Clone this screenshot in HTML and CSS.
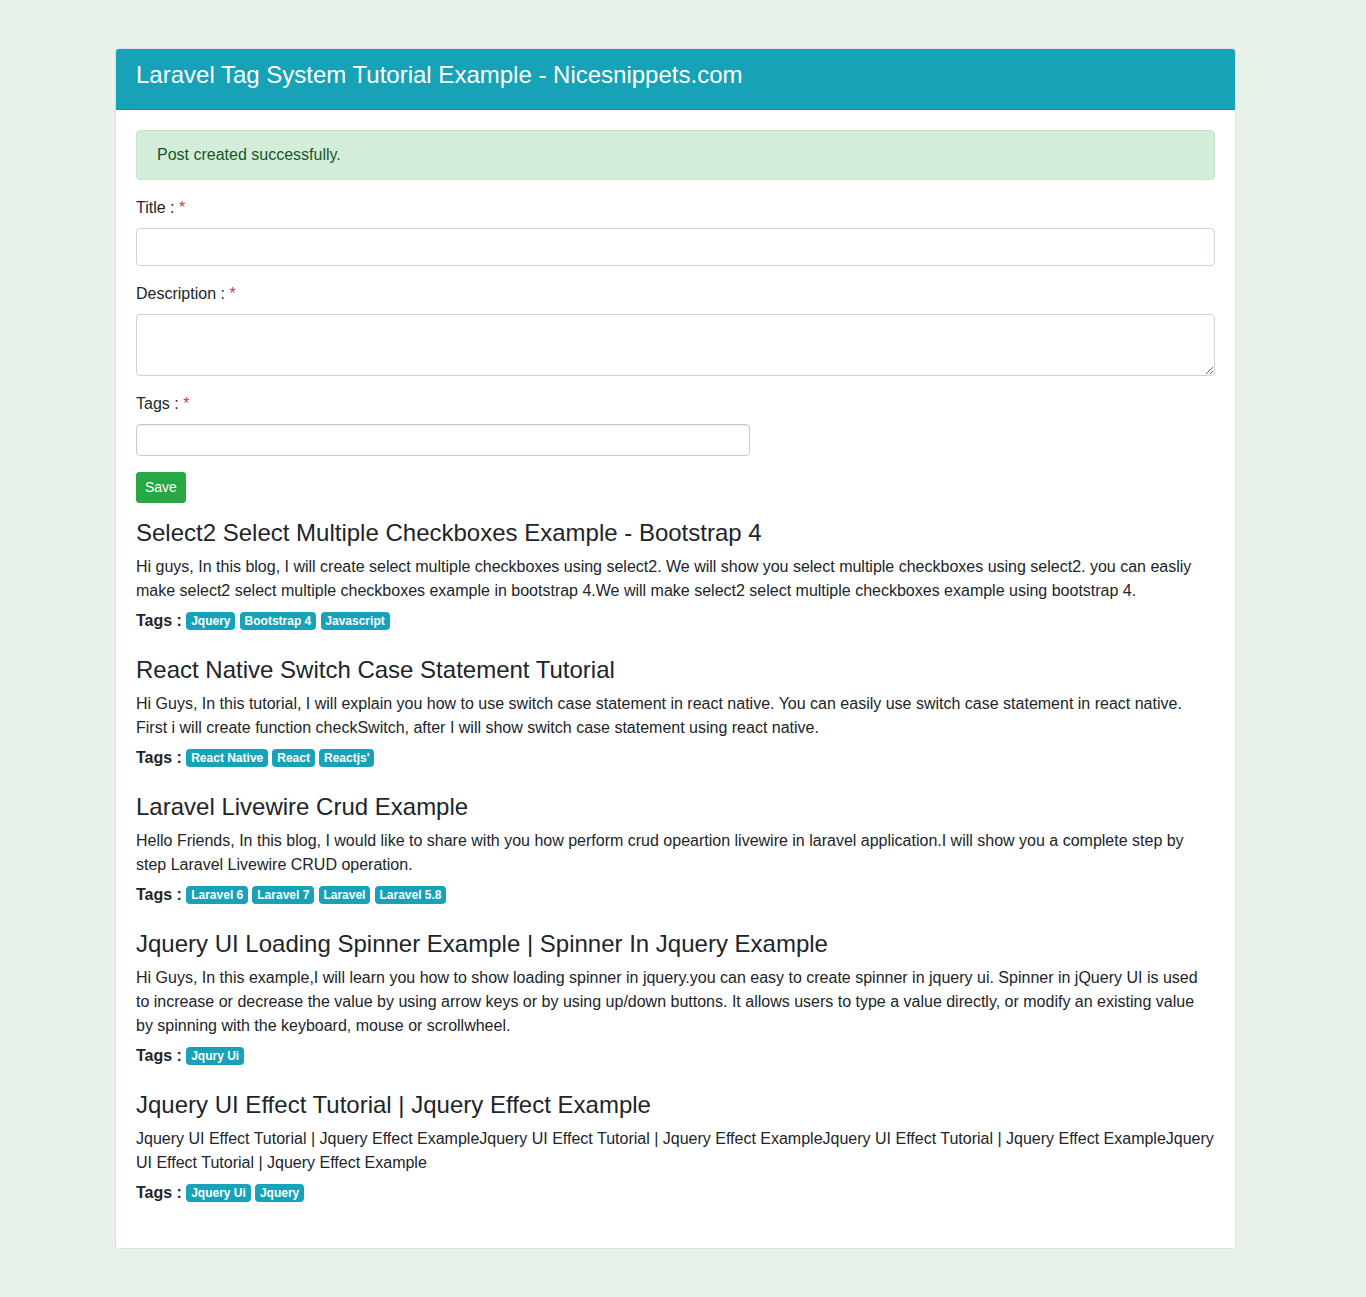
FILE: index.html
```html
<!DOCTYPE html>
<html lang="en">
<head>
<meta charset="utf-8">
<title>Laravel Tag System Tutorial Example</title>
<link rel="stylesheet" href="styles.css">
</head>
<body>
<div class="wrap">
  <div class="card">
    <div class="card-header">
      <h4 class="card-title">Laravel Tag System Tutorial Example - Nicesnippets.com</h4>
    </div>
    <div class="card-body">
      <div class="alert">Post created successfully.</div>
      <form class="form">
        <div class="form-group">
          <label class="label">Title : <span class="req">*</span></label>
          <input class="input" type="text">
        </div>
        <div class="form-group">
          <label class="label">Description : <span class="req">*</span></label>
          <textarea class="input textarea" rows="2"></textarea>
        </div>
        <div class="form-group">
          <label class="label">Tags : <span class="req">*</span></label>
          <div class="tags-input"></div>
        </div>
        <button type="button" class="btn">Save</button>
      </form>

      <div class="post">
        <h4 class="post-title">Select2 Select Multiple Checkboxes Example - Bootstrap 4</h4>
        <p class="post-text">Hi guys, In this blog, I will create select multiple checkboxes using select2. We will show you select multiple checkboxes using select2. you can easliy make select2 select multiple checkboxes example in bootstrap 4.We will make select2 select multiple checkboxes example using bootstrap 4.</p>
        <div class="tags"><strong>Tags :</strong> <span class="badge">Jquery</span> <span class="badge">Bootstrap 4</span> <span class="badge">Javascript</span></div>
      </div>

      <div class="post">
        <h4 class="post-title">React Native Switch Case Statement Tutorial</h4>
        <p class="post-text">Hi Guys, In this tutorial, I will explain you how to use switch case statement in react native. You can easily use switch case statement in react native. First i will create function checkSwitch, after I will show switch case statement using react native.</p>
        <div class="tags"><strong>Tags :</strong> <span class="badge">React Native</span> <span class="badge">React</span> <span class="badge">Reactjs'</span></div>
      </div>

      <div class="post">
        <h4 class="post-title">Laravel Livewire Crud Example</h4>
        <p class="post-text">Hello Friends, In this blog, I would like to share with you how perform crud opeartion livewire in laravel application.I will show you a complete step by step Laravel Livewire CRUD operation.</p>
        <div class="tags"><strong>Tags :</strong> <span class="badge">Laravel 6</span> <span class="badge">Laravel 7</span> <span class="badge">Laravel</span> <span class="badge">Laravel 5.8</span></div>
      </div>

      <div class="post">
        <h4 class="post-title">Jquery UI Loading Spinner Example | Spinner In Jquery Example</h4>
        <p class="post-text">Hi Guys, In this example,I will learn you how to show loading spinner in jquery.you can easy to create spinner in jquery ui. Spinner in jQuery UI is used to increase or decrease the value by using arrow keys or by using up/down buttons. It allows users to type a value directly, or modify an existing value by spinning with the keyboard, mouse or scrollwheel.</p>
        <div class="tags"><strong>Tags :</strong> <span class="badge">Jqury Ui</span></div>
      </div>

      <div class="post">
        <h4 class="post-title">Jquery UI Effect Tutorial | Jquery Effect Example</h4>
        <p class="post-text">Jquery UI Effect Tutorial | Jquery Effect ExampleJquery UI Effect Tutorial | Jquery Effect ExampleJquery UI Effect Tutorial | Jquery Effect ExampleJquery UI Effect Tutorial | Jquery Effect Example</p>
        <div class="tags"><strong>Tags :</strong> <span class="badge">Jquery Ui</span> <span class="badge">Jquery</span></div>
      </div>
    </div>
  </div>
</div>
</body>
</html>
```

FILE: styles.css
```css
* { box-sizing: border-box; }

html, body {
  margin: 0;
  padding: 0;
}

body {
  background: #e8f2e9;
  font-family: "Liberation Sans", Arial, Helvetica, sans-serif;
  font-size: 16px;
  line-height: 1.5;
  color: #212529;
}

.wrap {
  padding: 48px 0 48px 115px;
}

.card {
  width: 1121px;
  background: #fff;
  border: 1px solid rgba(0, 0, 0, 0.125);
  border-radius: 4px;
}

.card-header {
  background: #17a2b8;
  color: #fff;
  padding: 12px 20px;
  border-bottom: 1px solid rgba(0, 0, 0, 0.125);
  border-radius: 3px 3px 0 0;
}

.card-title {
  margin: 0 0 7px;
  font-size: 24px;
  font-weight: 400;
  line-height: 1.2;
}

.card-body {
  padding: 20px;
}

.alert {
  background: #d4edda;
  border: 1px solid #c3e6cb;
  color: #155724;
  border-radius: 4px;
  padding: 12px 20px;
  margin-bottom: 16px;
}

.form-group {
  margin-bottom: 16px;
}

.label {
  display: inline-block;
  margin-bottom: 8px;
}

.req {
  color: #dc3545;
}

.input {
  display: block;
  width: 100%;
  height: 38px;
  padding: 6px 12px;
  font: inherit;
  color: #495057;
  background: #fff;
  border: 1px solid #ced4da;
  border-radius: 4px;
}

.textarea {
  height: 62px;
  resize: vertical;
}

.tags-input {
  width: 614px;
  height: 32px;
  border: 1px solid #ccc;
  border-radius: 4px;
  box-shadow: inset 0 1px 1px rgba(0, 0, 0, 0.075);
  background: #fff;
}

.btn {
  display: block;
  font-family: inherit;
  font-size: 14px;
  line-height: 1.5;
  padding: 4px 8px;
  color: #fff;
  background: #28a745;
  border: 1px solid #28a745;
  border-radius: 3px;
  margin-bottom: 16px;
}

.post {
  margin-bottom: 23px;
}

.post-title {
  margin: 0 0 9px;
  font-size: 24px;
  font-weight: 400;
  line-height: 27px;
}

.post-text {
  margin: 0 0 6px;
}

.tags {
  line-height: 24px;
}

.tags strong {
  font-weight: 700;
}

.badge {
  display: inline-block;
  padding: 3px 4.8px;
  font-size: 12px;
  font-weight: 700;
  line-height: 1;
  color: #fff;
  background: #17a2b8;
  border-radius: 4px;
  vertical-align: 1px;
  white-space: nowrap;
}
```
